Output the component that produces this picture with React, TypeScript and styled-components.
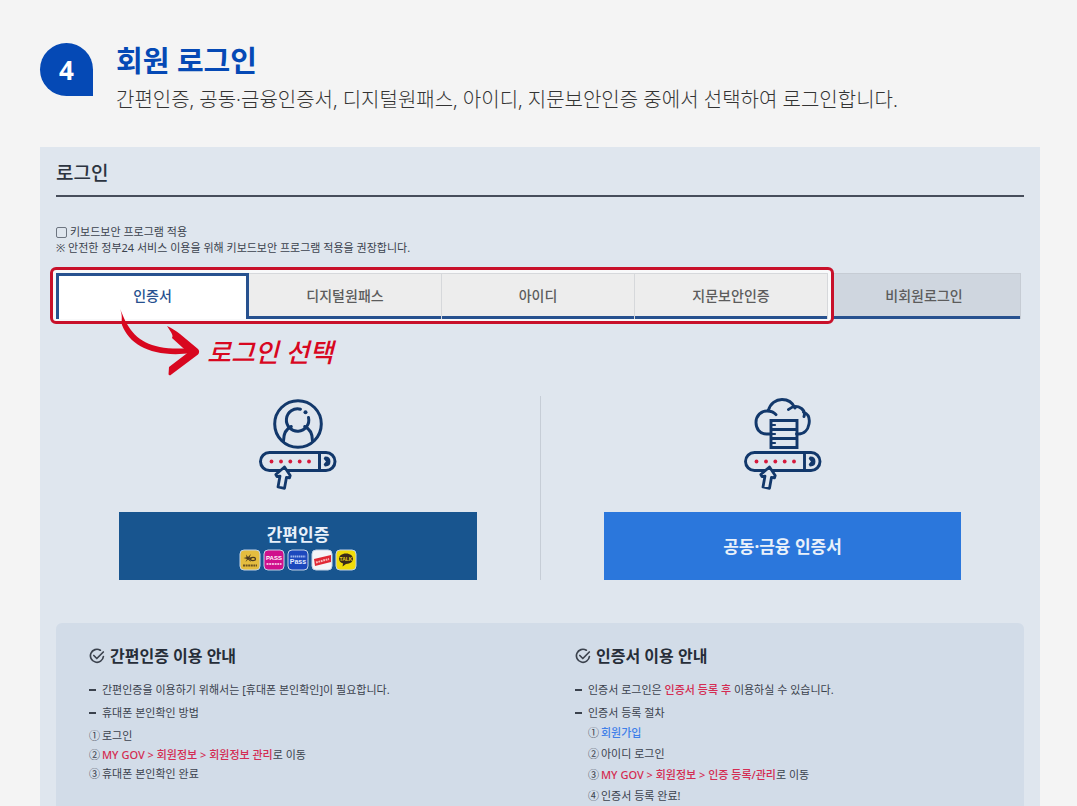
import React from "react";
import styled, { createGlobalStyle, css } from "styled-components";

const color = {
  page: "#f4f4f4",
  panel: "#dfe6ee",
  box: "#d2dce8",
  brand: "#0549b5",
  navy: "#12386b",
  tabBlue: "#27518f",
  red: "#c8102a",
  ink: "#3b424d",
};

const GlobalStyle = createGlobalStyle`
  * { box-sizing: border-box; }
  body {
    margin: 0;
    background: ${color.page};
    color: ${color.ink};
    font-family: "Noto Sans", "Noto Sans CJK KR", sans-serif;
    font-size: 11px;
  }
  h1, h2, h3, p, ul, ol { margin: 0; padding: 0; }
  ul, ol { list-style: none; }
  button { font-family: inherit; cursor: pointer; }
`;

const Page = styled.main`
  display: flex;
  flex-direction: column;
  min-height: 100vh;
  padding: 43px 37px 0 40px;
`;

const StepHeader = styled.header`
  display: flex;
  gap: 23px;
  margin-bottom: 33px;
`;

const StepBadge = styled.span`
  display: flex;
  flex: none;
  align-items: center;
  justify-content: center;
  width: 53px;
  height: 53px;
  border-radius: 50% 50% 0 50%;
  background: ${color.brand};
  color: #fff;
  font-size: 26px;
  font-weight: 700;
`;

const StepText = styled.div`
  display: flex;
  flex-direction: column;
  gap: 7px;
`;

const StepTitle = styled.h1`
  color: ${color.brand};
  font-size: 29px;
  font-weight: 700;
  line-height: 36px;
`;

const StepDescription = styled.p`
  color: #333;
  font-size: 20px;
  font-weight: 300;
  line-height: 28px;
`;

const Panel = styled.section`
  display: flex;
  flex: 1;
  flex-direction: column;
  padding: 12px 16px 0;
  background: ${color.panel};
`;

const PanelTitle = styled.h2`
  margin-bottom: 27px;
  padding-bottom: 8px;
  border-bottom: 2px solid #474e5b;
  color: #2c3440;
  font-size: 19px;
  font-weight: 500;
  line-height: 28px;
`;

const SecurityOption = styled.label`
  display: flex;
  align-items: center;
  gap: 3px;
  line-height: 16px;
`;

const Checkbox = styled.input`
  appearance: none;
  width: 11px;
  height: 11px;
  margin: 0;
  border: 1px solid #6d7580;
  border-radius: 2px;
`;

const Note = styled.p`
  line-height: 16px;
`;

const Tabs = styled.div`
  display: grid;
  grid-template-columns: 4fr 1fr;
  height: 46px;
  margin: 17px 3px 0 0;
`;

const HighlightedTabs = styled.div`
  position: relative;
  z-index: 1;
  display: grid;
  grid-template-columns: repeat(4, 1fr);

  &::before {
    content: "";
    position: absolute;
    inset: -6px -6px -5px;
    z-index: -1;
    border: 3px solid ${color.red};
    border-radius: 6px;
    background: #f8f9fa;
  }
`;

const Tab = styled.button<{ $state?: "active" | "guest" }>`
  padding: 0 0 3px;
  border: 1px solid #d6d8db;
  border-width: 1px 1px 0 0;
  background: #ededed;
  box-shadow: inset 0 -3px ${color.tabBlue};
  color: #5c5c5c;
  font-size: 14px;
  font-weight: 500;

  ${({ $state }) =>
    $state === "active" &&
    css`
      padding-bottom: 6px;
      border: 3px solid ${color.tabBlue};
      border-bottom: 0;
      background: #fff;
      box-shadow: none;
      color: ${color.tabBlue};
    `}

  ${({ $state }) =>
    $state === "guest" &&
    css`
      border-color: #c6ccd4;
      background: #cfd6df;
    `}
`;

const Annotation = styled.div`
  position: absolute;
  top: 34px;
  left: 60px;
  display: flex;
  align-items: flex-start;
  gap: 7px;
  color: #d8071f;
  font-size: 26px;
  font-style: italic;
  font-weight: 500;
  line-height: 90px;
  white-space: nowrap;
  pointer-events: none;
`;

const Methods = styled.div`
  display: grid;
  grid-template-columns: 1fr 1fr;
  margin-top: 77px;
`;

const Method = styled.div`
  display: flex;
  flex-direction: column;
  align-items: center;
  gap: 22px;

  & + & {
    border-left: 1px solid #c6cdd6;
  }
`;

const MethodButton = styled.button<{ $bright?: boolean }>`
  display: flex;
  flex-direction: column;
  align-items: center;
  justify-content: center;
  gap: 2px;
  width: 74%;
  height: 68px;
  padding: 2px 0 0;
  border: 0;
  background: ${({ $bright }) => ($bright ? "#2b77dc" : "#18558f")};
  color: #e9f1fa;
  font-size: 17px;
  font-weight: 700;
  line-height: 24px;
`;

const Providers = styled.span`
  display: flex;
  gap: 2px;
`;

const Guides = styled.div`
  display: grid;
  flex: 1;
  grid-template-columns: 1fr 1fr;
  column-gap: 4px;
  margin-top: 43px;
  border-radius: 6px 6px 0 0;
  background: ${color.box};
`;

const Guide = styled.section`
  padding: 21px 0 0 33px;
`;

const GuideTitle = styled.h3`
  display: flex;
  align-items: center;
  gap: 5px;
  margin-bottom: 13px;
  color: #262d38;
  font-size: 16px;
  font-weight: 700;
  line-height: 24px;
`;

const DashList = styled.ul`
  display: flex;
  flex-direction: column;
  gap: 5px;
  line-height: 18px;
`;

const DashItem = styled.li`
  display: flex;
  align-items: center;
  gap: 6px;

  &::before {
    content: "";
    width: 7px;
    height: 2px;
    background: ${color.ink};
  }
`;

const Steps = styled.ol<{ $nested?: boolean }>`
  margin: ${({ $nested }) => ($nested ? "0 0 0 13px" : "4px 0 0")};
  line-height: ${({ $nested }) => ($nested ? "21px" : "19px")};
`;

const Step = styled.li`
  display: flex;
  gap: 2px;
`;

const Point = styled.em`
  color: #d42c52;
  font-style: normal;
  font-weight: 500;
`;

const JoinLink = styled.a`
  color: #3f7fe8;
  font-weight: 500;
  text-decoration: none;
`;

function PasswordBar() {
  return (
    <>
      <rect x="4.500" y="56.500" width="74.500" height="18" rx="9" />
      <path d="M63.500 56.500V74.500" />
      <path d="M69.500 61.800c5 0 5 7.400 0 7.400M69 62.500l2.500 3-2.500 3" strokeWidth="2.400" />
      <g fill="#d6193c" stroke="none">
        {[15.500, 25, 34.300, 43.700, 53].map((x) => (
          <circle key={x} cx={x} cy="65.500" r="1.900" />
        ))}
      </g>
      <path
        d="M28.500 71 19.800 78.500 21 80.700 24 80.100 22 91 28.500 92.300 30.500 81.300 33.500 81.900 34.200 79.500Z"
        fill={color.panel}
        strokeWidth="2.800"
      />
    </>
  );
}

function PersonIcon() {
  return (
    <svg width="82" height="94" viewBox="1 0 82 94" fill="none" stroke={color.navy} strokeWidth="3" strokeLinecap="round" strokeLinejoin="round" aria-hidden="true">
      <circle cx="42" cy="28" r="23.300" />
      <path d="M44.500 13.200a11.200 11.200 0 1 0 8 8.300" />
      <circle cx="49.500" cy="16.300" r="2" fill={color.navy} stroke="none" />
      <path d="M27.500 45c0-7 2-12 7.800-14.500M56.500 45c0-7-2-12-7.800-14.500" />
      <PasswordBar />
    </svg>
  );
}

function CloudServerIcon() {
  return (
    <svg width="82" height="94" viewBox="1 0 82 94" fill="none" stroke={color.navy} strokeWidth="2.900" strokeLinecap="round" strokeLinejoin="round" aria-hidden="true">
      <path d="M29.500 38h-4c-7 0-10.500-5.500-10.500-11.500 0-7 5-11.500 11-11.500 4 0 7 1.200 9 3.700M27.500 14.500C29 7.500 35 3.500 41 3.500c6.500 0 11 4 13 8.500M47.500 13.500c4.500-4 9.500-3.500 13-1 2.500 2 3.500 5 2.500 8M62.500 16c5 2 6.500 6.500 5.500 12-1 6-5 10-10.500 10h-2" />
      <path d="M30 24.500h26v27H30zM30 33.500h26M30 42.500h26" strokeLinejoin="miter" />
      <path d="M31 29h3M31 38h3M31 47h3" strokeWidth="2.200" />
      <PasswordBar />
    </svg>
  );
}

function CheckIcon() {
  return (
    <svg width="16" height="16" viewBox="0 0 16 16" fill="none" stroke={color.ink} strokeWidth="1.700" strokeLinecap="round" strokeLinejoin="round" aria-hidden="true">
      <path d="M11.300 2.200A6.500 6.500 0 1 0 14.400 8.500" />
      <path d="M4.800 7.500 7.800 10.500 14.300 4" />
    </svg>
  );
}

function ArrowDrawing() {
  return (
    <svg width="84" height="72" viewBox="0 0 84 72" fill="#d8071f" aria-hidden="true">
      <path d="M4 2C7 8 8 12 11 17c10 18 28 27 64 24l1 5C38 51 14 39 6 18 5 13 7 9 4 2Z" />
      <path d="M51 19c5 2 9 5 13 8l18 15c1.500 1.500 1.500 4 0 5.500L54 68.500l-1.500-1 .5-7.500 19-14.500L56 31c2-3-2-7-5-12Z" />
    </svg>
  );
}

const providers = [
  {
    fill: "#e5bd3f",
    art: (
      <>
        <path d="M7 5.500 9 8l3-3-1.500 3.500 3 .5-3 1 1.500 3-3-2.500L6.500 13 8 10 4.500 9l3-.800Z" fill="#4b3a20" />
        <ellipse cx="14" cy="10" rx="2.500" ry="1.600" fill="none" stroke="#4b3a20" strokeWidth="1.300" />
        <path d="M4 16.500h14" stroke="#6b5323" strokeWidth="2" strokeDasharray="2 .6" />
      </>
    ),
  },
  {
    fill: "#d0108c",
    art: (
      <>
        <text x="11" y="11" fill="#fff" fontSize="6" fontWeight="700" textAnchor="middle">PASS</text>
        <path d="M3.500 15h15" stroke="#f3b5dc" strokeWidth="2" strokeDasharray="2 .7" />
      </>
    ),
  },
  {
    fill: "#1c48bd",
    art: (
      <>
        <path d="M3.500 7.500h15" stroke="#9db6ee" strokeWidth="2" strokeDasharray="1.600 .5" />
        <text x="11" y="15" fill="#e4ecff" fontSize="7" fontWeight="700" textAnchor="middle">Pass</text>
      </>
    ),
  },
  {
    fill: "#f4f5f8",
    art: (
      <>
        <path d="M3 10 20 6v7L4 17Z" fill="#e02835" />
        <path d="M5 13.500 18 10" stroke="#f8b9bb" strokeWidth="2" strokeDasharray="1.800 .7" />
      </>
    ),
  },
  {
    fill: "#f2dc0a",
    art: (
      <>
        <path d="M11 4.500c4.200 0 7 2.300 7 5.200s-2.800 5.200-7 5.200l-3.500 2.600.6-3C5.500 13.700 4 12 4 9.700c0-2.900 2.800-5.200 7-5.200Z" fill="#3a2a1a" />
        <text x="11" y="12" fill="#e8d21a" fontSize="5" fontWeight="700" textAnchor="middle">TALK</text>
      </>
    ),
  },
];

function ProviderIcons() {
  return (
    <Providers>
      {providers.map(({ fill, art }) => (
        <svg key={fill} width="22" height="22" viewBox="0 0 22 22" fontFamily="Liberation Sans, sans-serif" aria-hidden="true">
          <rect x="1" y="1" width="20" height="20" rx="4" fill={fill} stroke="#c3d4e8" />
          {art}
        </svg>
      ))}
    </Providers>
  );
}

export default function App() {
  return (
    <>
      <GlobalStyle />
      <Page>
        <StepHeader>
          <StepBadge>4</StepBadge>
          <StepText>
            <StepTitle>회원 로그인</StepTitle>
            <StepDescription>
              간편인증, 공동·금융인증서, 디지털원패스, 아이디, 지문보안인증 중에서 선택하여 로그인합니다.
            </StepDescription>
          </StepText>
        </StepHeader>

        <Panel>
          <PanelTitle>로그인</PanelTitle>
          <SecurityOption>
            <Checkbox type="checkbox" />
            키보드보안 프로그램 적용
          </SecurityOption>
          <Note>※ 안전한 정부24 서비스 이용을 위해 키보드보안 프로그램 적용을 권장합니다.</Note>

          <Tabs>
            <HighlightedTabs>
              <Tab type="button" $state="active">인증서</Tab>
              <Tab type="button">디지털원패스</Tab>
              <Tab type="button">아이디</Tab>
              <Tab type="button">지문보안인증</Tab>
              <Annotation>
                <ArrowDrawing />
                로그인 선택
              </Annotation>
            </HighlightedTabs>
            <Tab type="button" $state="guest">비회원로그인</Tab>
          </Tabs>

          <Methods>
            <Method>
              <PersonIcon />
              <MethodButton type="button">
                간편인증
                <ProviderIcons />
              </MethodButton>
            </Method>
            <Method>
              <CloudServerIcon />
              <MethodButton type="button" $bright>공동·금융 인증서</MethodButton>
            </Method>
          </Methods>

          <Guides>
            <Guide>
              <GuideTitle><CheckIcon />간편인증 이용 안내</GuideTitle>
              <DashList>
                <DashItem>간편인증을 이용하기 위해서는 [휴대폰 본인확인]이 필요합니다.</DashItem>
                <DashItem>휴대폰 본인확인 방법</DashItem>
              </DashList>
              <Steps>
                <Step><span>①</span><span>로그인</span></Step>
                <Step><span>②</span><span><Point>MY GOV &gt; 회원정보 &gt; 회원정보 관리</Point>로 이동</span></Step>
                <Step><span>③</span><span>휴대폰 본인확인 완료</span></Step>
              </Steps>
            </Guide>
            <Guide>
              <GuideTitle><CheckIcon />인증서 이용 안내</GuideTitle>
              <DashList>
                <DashItem><span>인증서 로그인은 <Point>인증서 등록 후</Point> 이용하실 수 있습니다.</span></DashItem>
                <DashItem>인증서 등록 절차</DashItem>
              </DashList>
              <Steps $nested>
                <Step><span>①</span><JoinLink href="#join">회원가입</JoinLink></Step>
                <Step><span>②</span><span>아이디 로그인</span></Step>
                <Step><span>③</span><span><Point>MY GOV &gt; 회원정보 &gt; 인증 등록/관리</Point>로 이동</span></Step>
                <Step><span>④</span><span>인증서 등록 완료!</span></Step>
              </Steps>
            </Guide>
          </Guides>
        </Panel>
      </Page>
    </>
  );
}
